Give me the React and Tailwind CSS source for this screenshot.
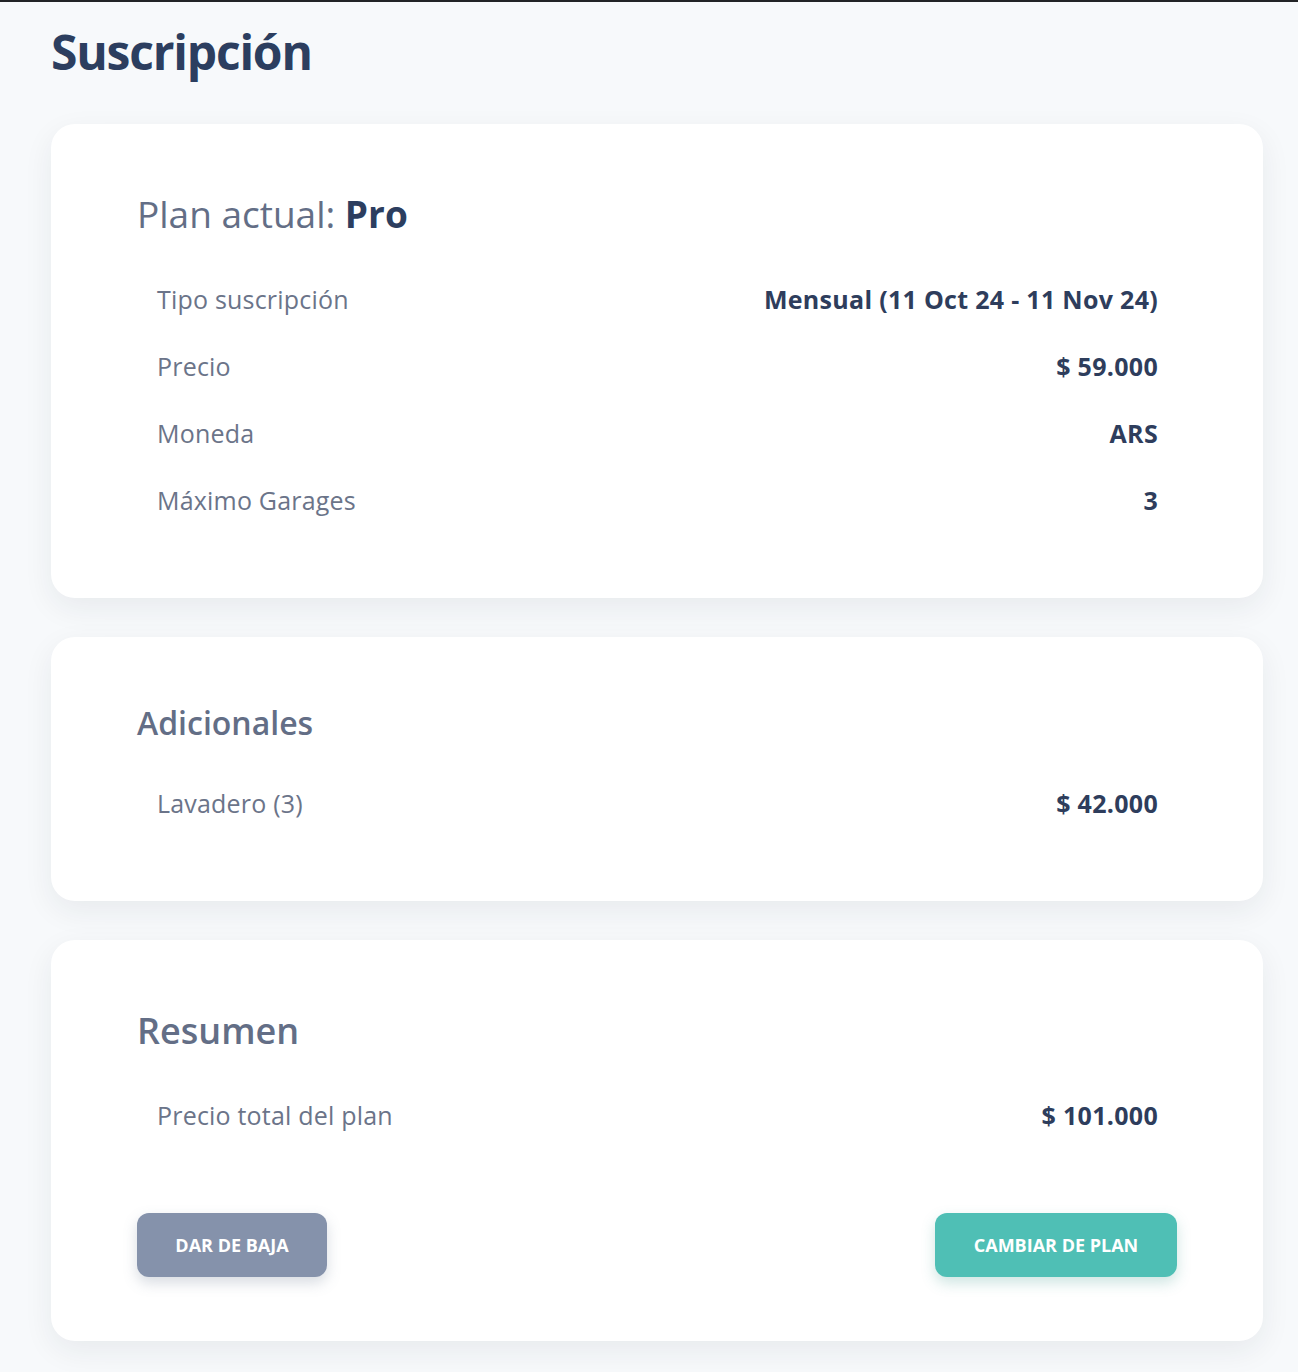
import React from 'react';

const planRows = [
  { label: 'Tipo suscripción', value: 'Mensual (11 Oct 24 - 11 Nov 24)' },
  { label: 'Precio', value: '$ 59.000' },
  { label: 'Moneda', value: 'ARS' },
  { label: 'Máximo Garages', value: '3' },
];

function Row({ label, value }) {
  return (
    <div className="flex h-[67px] items-center justify-between pl-[20px] pr-[19px] text-[25px]">
      <span className="tracking-[0.2px] text-[#6b7489]">{label}</span>
      <span className="font-bold tracking-[0.3px] text-[#2e3d5c]">{value}</span>
    </div>
  );
}

function Card({ className = '', children }) {
  return (
    <div className={`rounded-[24px] bg-white px-[86px] shadow-[0_10px_30px_rgba(30,41,59,0.07)] ${className}`}>
      {children}
    </div>
  );
}

export default function App() {
  return (
    <div
      className="min-h-screen bg-[#f7f9fb] border-t-2 border-[#222326]"
      style={{ fontFamily: '"Open Sans", "Noto Sans", sans-serif' }}
    >
      <div className="pl-[51px] pr-[35px] pt-[22px] pb-[30px]">
        <h1 className="mb-[44px] text-[48px] leading-[56px] font-bold tracking-[-1.2px] text-[#2c3e5f]">
          Suscripción
        </h1>

        <div className="flex flex-col gap-[39px]">
          <Card className="pt-[70px] pb-[64px]">
            <h2 className="mb-[32px] text-[37px] leading-[40px] text-[#636e86]">
              Plan actual: <span className="font-bold text-[#2c3e5f]">Pro</span>
            </h2>
            {planRows.map((r) => (
              <Row key={r.label} {...r} />
            ))}
          </Card>

          <Card className="pt-[66px] pb-[64px]">
            <h2 className="mb-[27px] text-[32px] leading-[40px] font-semibold text-[#636e86]">
              Adicionales
            </h2>
            <Row label="Lavadero (3)" value="$ 42.000" />
          </Card>

          <Card className="pt-[71px] pb-[64px]">
            <h2 className="mb-[31px] text-[36px] leading-[40px] font-semibold text-[#636e86]">
              Resumen
            </h2>
            <Row label="Precio total del plan" value="$ 101.000" />
            <div className="mt-[64px] flex items-center justify-between">
              <button className="h-[64px] w-[190px] rounded-[12px] bg-[#8592ab] text-[18px] font-bold text-white shadow-[0_6px_14px_rgba(100,116,139,0.25)]">
                DAR DE BAJA
              </button>
              <button className="h-[64px] w-[242px] rounded-[12px] bg-[#4fbfb5] text-[18px] font-bold text-white shadow-[0_6px_14px_rgba(60,150,140,0.25)]">
                CAMBIAR DE PLAN
              </button>
            </div>
          </Card>
        </div>
      </div>
    </div>
  );
}
